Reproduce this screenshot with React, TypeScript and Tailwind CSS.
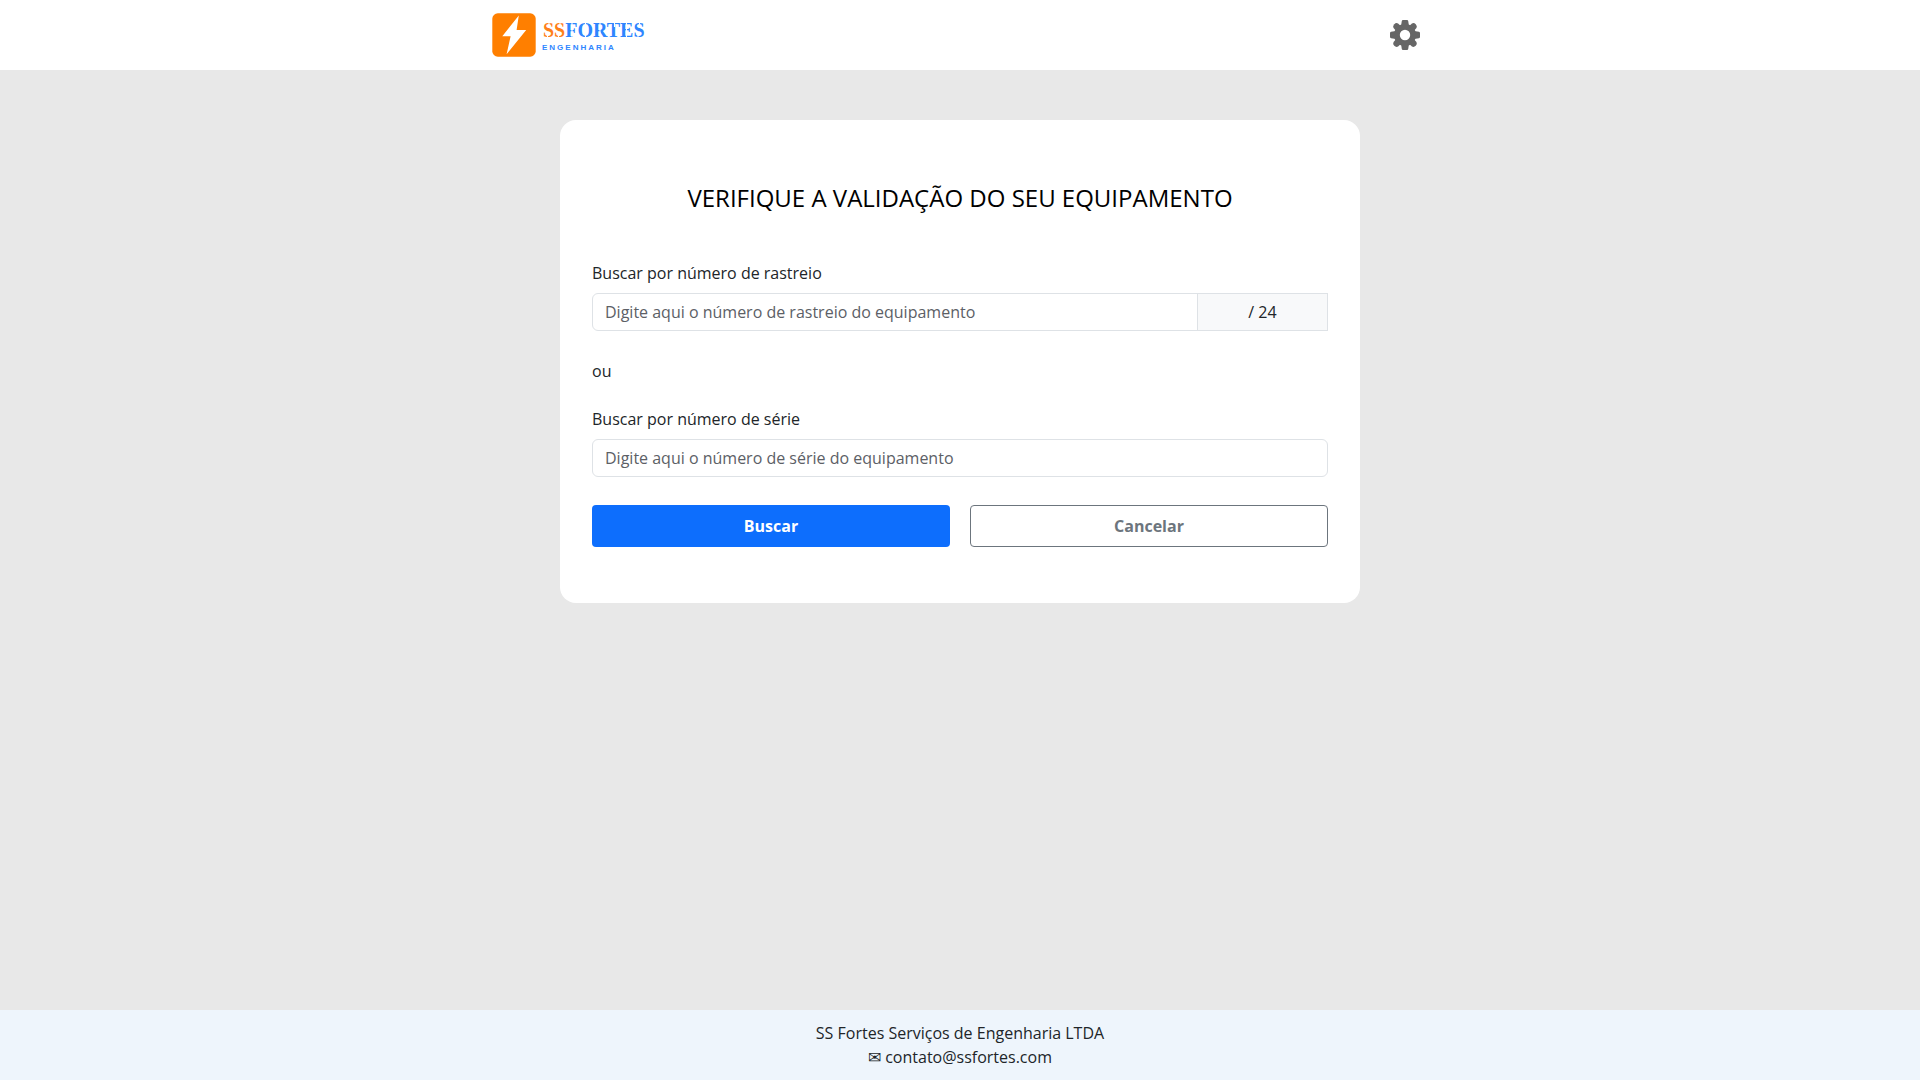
import type { ReactNode } from "react";

function BoltLogo() {
  return (
    <svg viewBox="0 0 44 44" className="size-11 shrink-0" aria-hidden="true">
      <rect x="0.3" y="0.3" width="43.4" height="43.4" rx="5.5" fill="#ff7f00" />
      <path d="M26.8 2.5 L10.3 23.2 H18.6 L14.6 41.2 L34.2 17 H24.6 Z" fill="#fff" />
    </svg>
  );
}

function StencilName() {
  return (
    <svg viewBox="0 0 106 24" className="h-6 w-[106px]" role="img" aria-label="SSFORTES">
      <g fontFamily="'Liberation Serif', serif" fontSize="20" fontWeight="700">
        <text x="1" y="18">
          <tspan fill="#ff7f1a">SS</tspan>
          <tspan fill="#2e86ff">FORTES</tspan>
        </text>
      </g>
      <g stroke="#fff" strokeWidth="1.1" fill="none">
        <path d="M7 4 V8 M5.5 14 V19 M18 4 V8 M16.5 14 V19 M97.5 4 V8 M96 14 V19" />
        <path d="M30 4 V19 M43.5 3 V20 M58 4 V19 M72.5 4 V8 M84.5 4 V19" />
      </g>
    </svg>
  );
}

function Gear() {
  return (
    <svg viewBox="-15 -15 30 30" className="size-[30px]" aria-hidden="true">
      <g fill="#666">
        <path
          fillRule="evenodd"
          d="M0 -11 A11 11 0 1 1 0 11 A11 11 0 1 1 0 -11 Z M0 -5.2 A5.2 5.2 0 1 0 0 5.2 A5.2 5.2 0 1 0 0 -5.2 Z"
        />
        {[0, 90, 180, 270].map((a) => (
          <path key={a} transform={`rotate(${a})`} d="M-4 -9 L-3.2 -14 Q-3 -15 -2 -15 H2 Q3 -15 3.2 -14 L4 -9 Z" />
        ))}
        {[45, 135, 225, 315].map((a) => (
          <path key={a} transform={`rotate(${a})`} d="M-3.4 -9 L-3.2 -13 Q-2.6 -15.2 0 -15.2 Q2.6 -15.2 3.2 -13 L3.4 -9 Z" />
        ))}
      </g>
    </svg>
  );
}

const fieldClass =
  "h-[38px] min-w-0 flex-1 border border-[#dee2e6] bg-white px-3 text-base text-[#212529] placeholder:text-[#5c6066] outline-none focus:border-[#86b7fe]";

function Field({ id, label, children }: { id: string; label: string; children: ReactNode }) {
  return (
    <div>
      <label htmlFor={id} className="mb-2 block">
        {label}
      </label>
      <div className="flex">{children}</div>
    </div>
  );
}

export default function App() {
  return (
    <div className="flex min-h-screen flex-col bg-[#e8e8e8] font-['Open_Sans',sans-serif] text-base leading-6 text-[#212529]">
      <header className="bg-white">
        <div className="mx-auto flex h-[70px] w-full max-w-[960px] items-center justify-between pr-5 pl-3">
          <a href="#" className="flex items-center gap-1.5">
            <BoltLogo />
            <span className="flex flex-col pt-0.5">
              <StencilName />
              <span className="font-['Liberation_Sans',sans-serif] text-[8px] leading-[10px] font-bold tracking-[2px] text-[#2e86ff]">
                ENGENHARIA
              </span>
            </span>
          </a>
          <button type="button" aria-label="Configurações" className="cursor-pointer">
            <Gear />
          </button>
        </div>
      </header>

      <main className="flex-1 px-4 py-[50px]">
        <form
          className="mx-auto max-w-[800px] rounded-2xl bg-white px-8 pt-[62px] pb-14"
          onSubmit={(e) => e.preventDefault()}
        >
          <h1 className="mb-[47px] text-center text-2xl text-black">VERIFIQUE A VALIDAÇÃO DO SEU EQUIPAMENTO</h1>

          <Field id="rastreio" label="Buscar por número de rastreio">
            <input
              id="rastreio"
              type="text"
              placeholder="Digite aqui o número de rastreio do equipamento"
              className={`${fieldClass} rounded-l-md`}
            />
            <span className="-ml-px flex w-[131px] items-center justify-center border border-[#dee2e6] bg-[#f8f9fa]">
              / 24
            </span>
          </Field>

          <p className="mt-7 mb-6">ou</p>

          <Field id="serie" label="Buscar por número de série">
            <input
              id="serie"
              type="text"
              placeholder="Digite aqui o número de série do equipamento"
              className={`${fieldClass} rounded-md`}
            />
          </Field>

          <div className="mt-7 grid grid-cols-2 gap-5 font-bold">
            <button type="submit" className="h-[42px] cursor-pointer rounded bg-[#0d6efd] text-white">
              Buscar
            </button>
            <button
              type="reset"
              className="h-[42px] cursor-pointer rounded border border-[#6c757d] bg-white text-[#6c757d]"
            >
              Cancelar
            </button>
          </div>
        </form>
      </main>

      <footer className="bg-[#eef5fc] py-[11px] text-center">
        <p>SS Fortes Serviços de Engenharia LTDA</p>
        <p>✉ contato@ssfortes.com</p>
      </footer>
    </div>
  );
}
